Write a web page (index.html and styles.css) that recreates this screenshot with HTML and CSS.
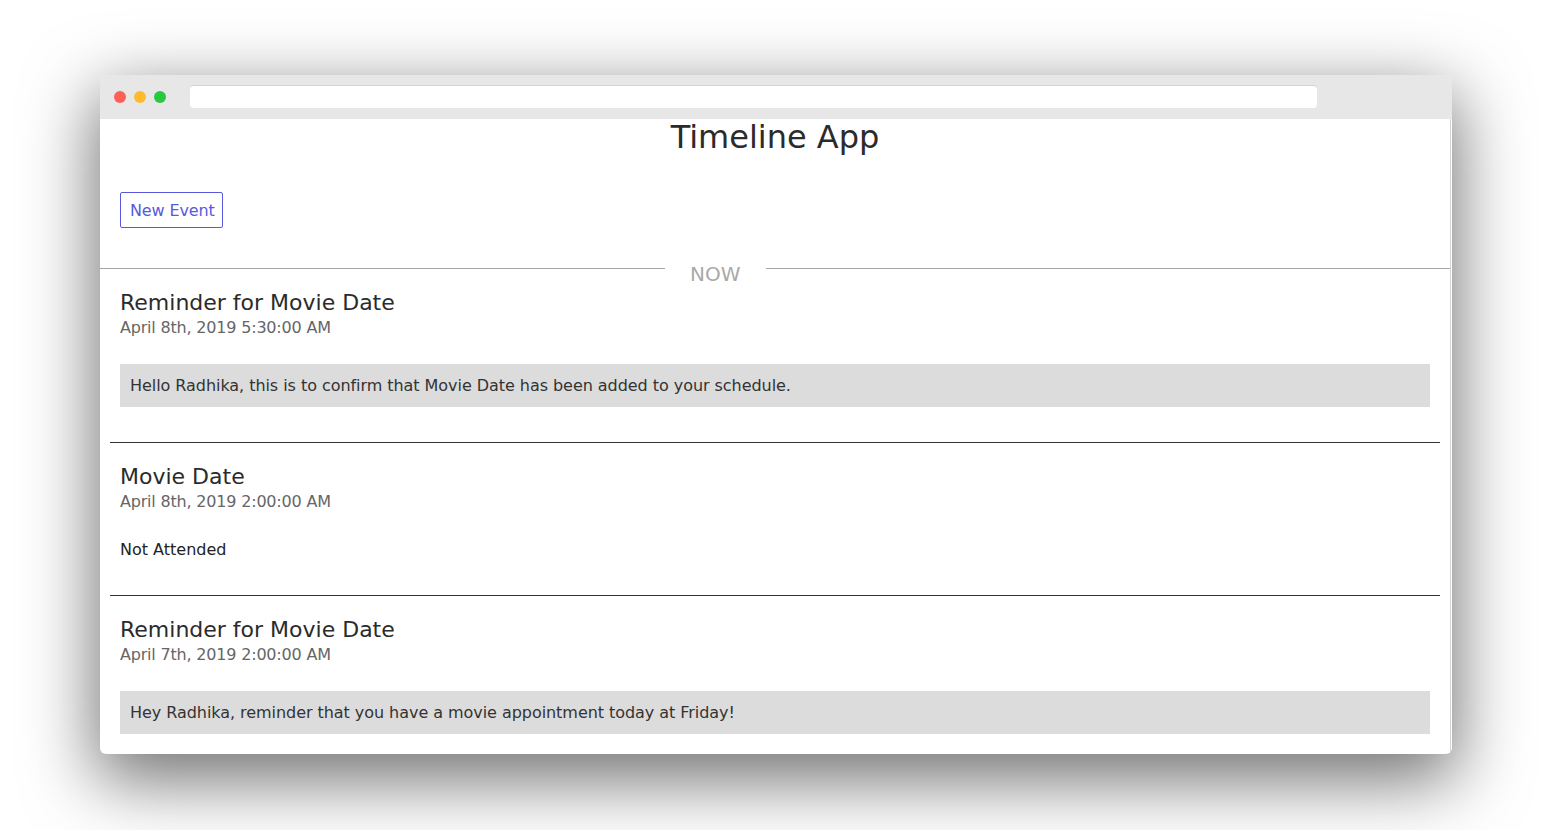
FILE: index.html
```html
<!DOCTYPE html>
<html lang="en">
<head>
<meta charset="utf-8">
<title>Timeline App</title>
<link rel="stylesheet" href="styles.css">
</head>
<body>
<div class="window">
  <div class="titlebar">
    <span class="dot dot-red"></span>
    <span class="dot dot-yellow"></span>
    <span class="dot dot-green"></span>
    <div class="address"></div>
  </div>
  <div class="page">
    <h1 class="app-title">Timeline App</h1>
    <div class="toolbar">
      <button class="btn-new">New Event</button>
    </div>
    <div class="divider">
      <span class="divider-line divider-left"></span>
      <span class="divider-label">NOW</span>
      <span class="divider-line divider-right"></span>
    </div>
    <div class="events">
      <div class="event event-first">
        <div class="event-title">Reminder for Movie Date</div>
        <div class="event-date">April 8th, 2019 5:30:00 AM</div>
        <div class="message-box">Hello Radhika, this is to confirm that Movie Date has been added to your schedule.</div>
      </div>
      <div class="event">
        <div class="event-title">Movie Date</div>
        <div class="event-date">April 8th, 2019 2:00:00 AM</div>
        <div class="note">Not Attended</div>
      </div>
      <div class="event">
        <div class="event-title">Reminder for Movie Date</div>
        <div class="event-date">April 7th, 2019 2:00:00 AM</div>
        <div class="message-box">Hey Radhika, reminder that you have a movie appointment today at Friday!</div>
      </div>
    </div>
  </div>
</div>
</body>
</html>
```

FILE: styles.css
```css
html, body {
  margin: 0;
  padding: 0;
  background: #ffffff;
}

body {
  min-height: 830px;
  box-sizing: border-box;
  padding: 75px 100px 0 100px;
  font-family: "DejaVu Sans", "Liberation Sans", sans-serif;
  color: #333333;
}

.window {
  width: 1352px;
  height: 679px;
  border-radius: 6px;
  overflow: hidden;
  background: #ffffff;
  box-shadow: 0 22px 70px 4px rgba(0, 0, 0, 0.56);
}

.titlebar {
  height: 44px;
  background: #e7e7e7;
  display: flex;
  align-items: center;
  padding-left: 14px;
  box-sizing: border-box;
}

.dot {
  width: 12px;
  height: 12px;
  border-radius: 50%;
  margin-right: 8px;
  flex: none;
}

.dot-red { background: #fe5f57; }
.dot-yellow { background: #febb2e; }
.dot-green { background: #28c840; }

.address {
  margin-left: 16px;
  width: 1127px;
  height: 23px;
  margin-top: -1px;
  background: #ffffff;
  border-radius: 4px;
  box-sizing: border-box;
  border-top: 1px solid #d2d2d2;
}

.page {
  width: 1350px;
  height: 635px;
  border-right: 1px solid #d4d4d4;
  overflow: hidden;
}

.app-title {
  margin: 0;
  font-size: 32px;
  line-height: 37px;
  font-weight: normal;
  text-align: center;
  color: #2b2b2b;
}

.toolbar {
  padding: 36px 20px 0 20px;
}

.btn-new {
  display: block;
  font-family: "DejaVu Sans", "Liberation Sans", sans-serif;
  font-size: 16px;
  line-height: 19px;
  padding: 8px 7px 7px 9px;
  margin: 0;
  border: 1px solid #5959dd;
  border-radius: 2px;
  background: #ffffff;
  color: #5959dd;
  letter-spacing: -0.12px;
}

.divider {
  margin-top: 35px;
  display: flex;
  align-items: flex-start;
  height: 23px;
}

.divider-line {
  height: 1px;
  margin-top: 5px;
  background: #a6a6a6;
}

.divider-left {
  width: 565px;
  flex: none;
}

.divider-right {
  flex: 1;
}

.divider-label {
  padding: 0 26px 0 25px;
  font-size: 20px;
  line-height: 23px;
  color: #a9a9a9;
}

.events {
  margin: 0 10px;
}

.event {
  padding: 21px 10px 35px 10px;
  border-bottom: 1px solid #333333;
}

.event-first {
  padding-top: 4px;
}

.event-title {
  font-size: 22px;
  line-height: 26px;
  color: #2b2b2b;
}

.event-date {
  margin-top: 2px;
  font-size: 16px;
  line-height: 19px;
  color: #666666;
  letter-spacing: -0.19px;
}

.message-box {
  margin-top: 27px;
  padding: 12px 10px;
  background: #dcdcdc;
  font-size: 16px;
  line-height: 19px;
  color: #333333;
  letter-spacing: -0.05px;
}

.note {
  margin-top: 29px;
  margin-bottom: 1px;
  font-size: 16px;
  line-height: 19px;
  color: #222222;
}
```
